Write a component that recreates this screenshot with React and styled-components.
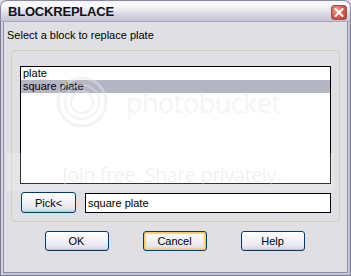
import React from "react";
import styled, { createGlobalStyle } from "styled-components";

const Global = createGlobalStyle`
  html, body { margin: 0; padding: 0; background: #e0dfe3; }
  * { box-sizing: border-box; }
`;

const Window = styled.div`
  position: relative;
  width: 351px;
  height: 276px;
  display: flex;
  flex-direction: column;
  font-family: "Liberation Sans", Arial, sans-serif;
  font-size: 11px;
  color: #000;
  background: #e0dfe3;
  overflow: hidden;
`;

const TitleBar = styled.div`
  height: 22px;
  flex: none;
  display: flex;
  align-items: center;
  justify-content: space-between;
  padding: 0 3px 0 7px;
  border: 1px solid #8a8aa4;
  border-bottom: 1px solid #a8a8bc;
  border-radius: 7px 7px 0 0;
  background: linear-gradient(
    to bottom,
    #f4f4f8 0%,
    #fcfcfe 20%,
    #e8e8ef 45%,
    #d6d6e2 70%,
    #c4c4d4 100%
  );
`;

const Title = styled.span`
  font-family: "Liberation Sans", Arial, sans-serif;
  font-weight: bold;
  font-size: 13px;
  letter-spacing: -0.2px;
  color: #10101a;
  padding-top: 1px;
`;

const CloseButton = styled.div`
  width: 16px;
  height: 15px;
  border-radius: 3px;
  border: 1px solid #a84848;
  background: radial-gradient(circle at 35% 30%, #f0a090 0%, #d45a48 55%, #b83a30 100%);
  display: flex;
  align-items: center;
  justify-content: center;
  margin-top: 2px;
`;

const Frame = styled.div`
  flex: 1;
  display: flex;
  flex-direction: column;
  border-left: 1px solid #7a7a94;
  border-right: 1px solid #7a7a94;
  border-bottom: 1px solid #7a7a94;
  box-shadow: inset 2px 0 0 #d4d4de, inset -2px 0 0 #c4c4d4, inset 0 -2px 0 #c4c4d4,
    inset 3px 0 0 #8e8ea6, inset -3px 0 0 #8e8ea6, inset 0 -3px 0 #8e8ea6;
  padding: 4px 10px 0 10px;
`;

const Prompt = styled.div`
  height: 20px;
  line-height: 14px;
  margin-left: -4px;
  padding-top: 2px;
  white-space: nowrap;
`;

const Group = styled.div`
  margin-top: 4px;
  border: 1px solid #d0d0bf;
  border-radius: 4px;
  padding: 15px 8px 8px 8px;
  display: flex;
  flex-direction: column;
  gap: 8px;
`;

const ListBox = styled.div`
  height: 118px;
  border: 1px solid #000;
  background: #fff;
  display: flex;
  flex-direction: column;
`;

const ListItem = styled.div`
  height: 13px;
  line-height: 13px;
  padding-left: 2px;
  white-space: nowrap;
  background: ${(p) => (p.selected ? "#b4b6c4" : "transparent")};
`;

const PickRow = styled.div`
  display: flex;
  align-items: center;
  gap: 9px;
  padding-left: 1px;
`;

const Button = styled.div`
  width: ${(p) => p.w || 64}px;
  height: ${(p) => p.h || 20}px;
  border: 1px solid #003c74;
  border-radius: 3px;
  background: linear-gradient(to bottom, #ffffff 0%, #f4f4f8 40%, #e8e8f0 75%, #d4d4e2 100%);
  display: flex;
  align-items: center;
  justify-content: center;
  font-size: 11px;
  color: #000;
  box-shadow: ${(p) =>
    p.focused ? "inset 0 0 0 1px #fbc65c, inset 0 0 0 2px #f7d38a" : "inset 0 -1px 0 #c4c4d6"};
`;

const TextField = styled.div`
  flex: 1;
  height: 20px;
  border: 1px solid #000;
  background: #fff;
  padding-left: 2px;
  display: flex;
  align-items: center;
  font-size: 11px;
`;

const ButtonRow = styled.div`
  display: flex;
  justify-content: center;
  gap: 34px;
  margin-top: 9px;
  padding-right: 2px;
`;

const Watermark = styled.div`
  position: absolute;
  left: 7px;
  top: 153px;
  width: 327px;
  height: 38px;
  background: rgba(255, 255, 255, 0.2);
  pointer-events: none;
  display: flex;
  justify-content: center;
  align-items: center;
`;

const WatermarkText = styled.div`
  font-family: "Open Sans", "Liberation Sans", sans-serif;
  font-size: 20px;
  letter-spacing: -0.5px;
  color: rgba(224, 224, 230, 0.45);
  margin-left: 2px;
  margin-top: 4px;
`;

const LogoArea = styled.div`
  position: absolute;
  left: 52px;
  top: 76px;
  display: flex;
  align-items: center;
  gap: 14px;
  pointer-events: none;
`;

const LogoText = styled.div`
  font-family: "Open Sans", "Liberation Sans", sans-serif;
  font-size: 27px;
  letter-spacing: -0.5px;
  color: rgba(228, 228, 234, 0.4);
`;

export default function App() {
  return (
    <>
      <Global />
      <Window>
        <TitleBar>
          <Title>BLOCKREPLACE</Title>
          <CloseButton>
            <svg width="10" height="9" viewBox="0 0 10 9">
              <path d="M1.5 1 L8.5 8 M8.5 1 L1.5 8" stroke="#fff" strokeWidth="2" strokeLinecap="square" />
            </svg>
          </CloseButton>
        </TitleBar>
        <Frame>
          <Prompt>Select a block to replace plate</Prompt>
          <Group>
            <ListBox>
              <ListItem>plate</ListItem>
              <ListItem selected>square plate</ListItem>
            </ListBox>
            <PickRow>
              <Button w={55} h={21}>Pick&lt;</Button>
              <TextField>square plate</TextField>
            </PickRow>
          </Group>
          <ButtonRow>
            <Button>OK</Button>
            <Button focused>Cancel</Button>
            <Button>Help</Button>
          </ButtonRow>
        </Frame>
        <LogoArea>
          <svg width="60" height="52" viewBox="0 0 60 52">
            <g fill="none" stroke="rgba(228,228,234,0.45)">
              <circle cx="30" cy="26" r="24" strokeWidth="3" />
              <circle cx="30" cy="26" r="17" strokeWidth="2" />
              <circle cx="30" cy="26" r="11" strokeWidth="2" />
            </g>
          </svg>
          <LogoText>photobucket</LogoText>
        </LogoArea>
        <Watermark>
          <WatermarkText>Join free. Share privately.</WatermarkText>
        </Watermark>
      </Window>
    </>
  );
}
